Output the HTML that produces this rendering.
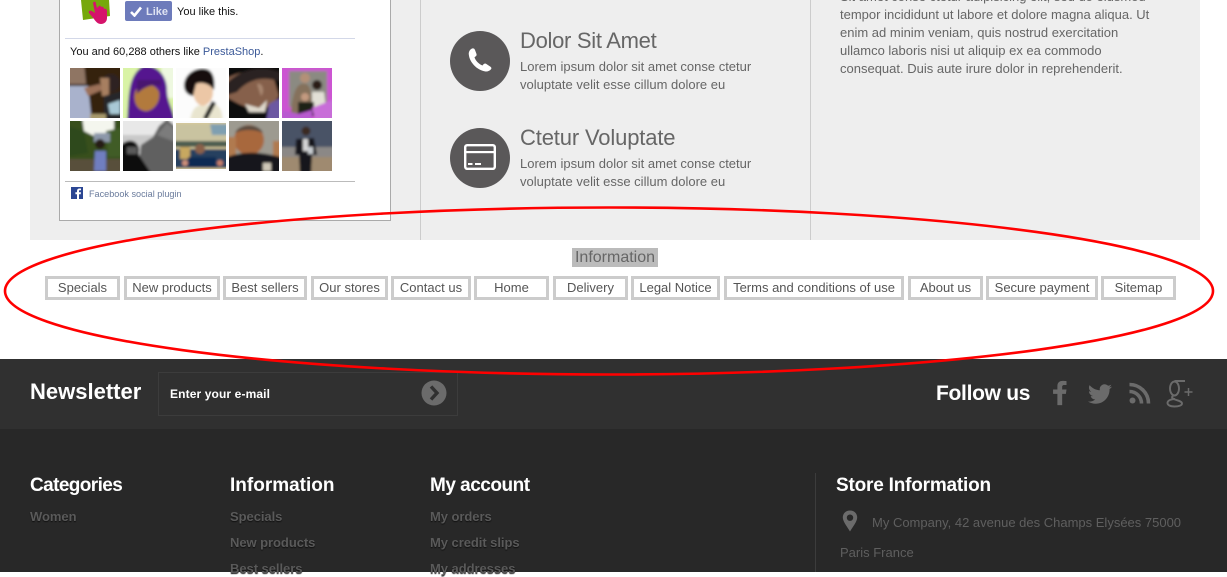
<!DOCTYPE html>
<html lang="en">
<head>
<meta charset="utf-8">
<title>Footer</title>
<style>
html,body{margin:0;padding:0;width:1227px;height:572px;overflow:hidden;background:#fff;font-family:"Liberation Sans",sans-serif}
.a{position:absolute;white-space:nowrap}
.bx{position:absolute;top:276px;height:18px;line-height:17px;border:3px solid #ccc;text-align:center;font-size:13px;color:#555;background:#fff;box-sizing:content-box}
.p{position:absolute;width:50px;height:50px;display:block}
.lorem{font-size:13px;line-height:18px;color:#666;left:520px}
.h{font-size:22px;line-height:26px;color:#666;left:520px;letter-spacing:-.3px}
.ft{font-size:19px;font-weight:bold;color:#fff;line-height:24px}
.lk{font-size:13px;font-weight:bold;color:#5a5a5a;line-height:16px;letter-spacing:-.05px;text-shadow:0 1px 1px #111}
</style>
</head>
<body>
<div class="a" style="left:30px;top:0;width:1170px;height:240px;background:#eee"></div>
<div class="a" style="left:420px;top:0;width:1px;height:240px;background:#ccc"></div>
<div class="a" style="left:810px;top:0;width:1px;height:240px;background:#ccc"></div>

<div class="a" style="left:59px;top:-5px;width:330px;height:224px;background:#fff;border:1px solid #aaa"></div>
<svg class="a" style="left:78px;top:0" width="36" height="26" viewBox="0 0 36 26">
<path d="M3 0H31L32 16L5 20Z" fill="#76a80c"/>
<path d="M15 3C16 1 18 1 18 4L19 8L21 6C22 5 23 6 23 7C24 6 26 7 26 9C27 8 29 9 29 11L29 18C29 22 26 24 23 24C20 24 18 22 16 19L11 13C10 11 12 10 14 11L17 13Z" fill="#d5136b"/>
</svg>
<div class="a" style="left:125px;top:1px;width:47px;height:20px;background:#6d7bbb;border-radius:2px"></div>
<svg class="a" style="left:130px;top:6px" width="12" height="11" viewBox="0 0 12 11"><path d="M1 6L4.500 9.500L11 1.500" fill="none" stroke="#fff" stroke-width="2.600"/></svg>
<div class="a" style="left:146px;top:4px;font-size:11px;line-height:16px;font-weight:bold;color:#dfe3f2">Like</div>
<div class="a" style="left:177px;top:4px;font-size:11px;line-height:16px;color:#111">You like this.</div>
<div class="a" style="left:65px;top:38px;width:290px;height:1px;background:#d3d8e8"></div>
<div class="a" style="left:70px;top:44px;font-size:11px;line-height:16px;color:#111">You and 60,288 others like <span style="color:#3b5998">PrestaShop</span>.</div>

<svg width="0" height="0" style="position:absolute"><filter id="b" x="0" y="0" width="100%" height="100%"><feGaussianBlur stdDeviation="1.300"/></filter></svg>
<svg class="p" style="left:70px;top:68px" viewBox="0 0 50 50"><g filter="url(#b)"><rect x="-10" y="-10" width="70" height="70" fill="#35200f"/><path d="M-5 -5H14L16 16H-5Z" fill="#8f7464"/><path d="M-5 18H18L22 55H-5Z" fill="#a9b2cc"/><path d="M14 20L30 16L32 22L18 28Z" fill="#9c7158"/><circle cx="41" cy="15" r="9" fill="#2d2420"/><path d="M30 10H39V28H32Z" fill="#a77f60"/><path d="M34 28L55 22V55H34Z" fill="#27272b"/><path d="M38 36L50 32V46H40Z" fill="#a9c9d6"/><rect y="46" x="20" width="16" height="9" fill="#a89a6c"/></g></svg>
<svg class="p" style="left:123px;top:68px" viewBox="0 0 50 50"><g filter="url(#b)"><rect x="-10" y="-10" width="70" height="70" fill="#d9f3a6"/><path d="M38 -5H55V30L40 30Z" fill="#eef8e0"/><path d="M4 55C6 30 4 8 20 -2C34 -4 44 8 44 22C44 34 50 40 52 55Z" fill="#55178f"/><path d="M12 24C16 14 32 14 36 24C38 36 28 44 22 43C14 42 10 34 12 24Z" fill="#b27a3c"/><path d="M14 12H38V18C30 16 22 18 14 26Z" fill="#4a1470"/></g></svg>
<svg class="p" style="left:176px;top:68px" viewBox="0 0 50 50"><g filter="url(#b)"><rect x="-10" y="-10" width="70" height="70" fill="#fcfcfc"/><path d="M18 14C26 10 37 12 37 24C37 34 30 38 26 38C20 36 15 28 18 18Z" fill="#ecc7a6"/><path d="M8 17C9 4 22 -1 30 1C39 3 39 16 38 22C32 14 24 14 20 16L17 28C11 27 8 23 8 17Z" fill="#14100f"/><path d="M14 55C15 40 22 36 26 38C32 38 38 34 42 38C46 42 46 46 47 55Z" fill="#e9e5cf"/><path d="M27 50L36 33L40 35L31 52Z" fill="#1c1c1c"/></g></svg>
<svg class="p" style="left:229px;top:68px" viewBox="0 0 50 50"><g filter="url(#b)"><rect x="-10" y="-10" width="70" height="70" fill="#0d0b0a"/><path d="M-5 12C10 2 34 0 44 8L50 28L44 36L30 44L10 36L-5 28Z" fill="#86614c"/><path d="M-5 18C10 0 36 -4 55 6L52 14C36 8 20 10 8 24L-5 28Z" fill="#2a2420"/><path d="M16 36L30 40L38 32L36 44L20 44Z" fill="#ded8cc"/><path d="M40 36L55 28V55H37Z" fill="#6c59a2"/><path d="M28 16C34 14 36 24 32 28Z" fill="#a88670"/></g></svg>
<svg class="p" style="left:282px;top:68px" viewBox="0 0 50 50"><g filter="url(#b)"><rect x="-10" y="-10" width="70" height="70" fill="#cc55d2"/><rect x="7" y="3" width="38" height="36" fill="#8b8a82"/><path d="M8 55C10 20 16 14 24 16C30 18 30 30 30 55Z" fill="#85715c"/><circle cx="23" cy="10" r="5" fill="#b39078"/><circle cx="35" cy="17" r="5" fill="#2a1d18"/><path d="M30 24H42L44 40H30Z" fill="#e2e0d6"/><circle cx="23" cy="29" r="4" fill="#c39a80"/><path d="M16 34H32V48H16Z" fill="#1a2018"/><path d="M30 40L55 30V55H34Z" fill="#c86dd8"/><path d="M0 42L16 46L30 42V55H0Z" fill="#b85ad0"/></g></svg>
<svg class="p" style="left:70px;top:121px" viewBox="0 0 50 50"><g filter="url(#b)"><rect x="-10" y="-10" width="70" height="70" fill="#37501f"/><path d="M12 -5H44V12L26 16L14 10Z" fill="#f4f6ee"/><path d="M-5 4L14 10L18 32L-5 36Z" fill="#2d4a1a"/><path d="M36 10L55 6V36L38 36Z" fill="#3f5c26"/><path d="M-5 38H55V55H-5Z" fill="#58503a"/><rect x="24" y="12" width="16" height="9" fill="#8d98aa"/><circle cx="30" cy="23" r="5" fill="#251b14"/><path d="M25 30H36L36 50H24Z" fill="#6f7ec0"/></g></svg>
<svg class="p" style="left:123px;top:121px" viewBox="0 0 50 50"><g filter="url(#b)"><rect x="-10" y="-10" width="70" height="70" fill="#e8e8e8"/><path d="M-5 14H50V30H-5Z" fill="#bcbcbc" opacity=".7"/><path d="M14 55L18 24L30 16L36 5L44 -2L55 8V55Z" fill="#606060"/><path d="M34 14L44 2L55 10V22Z" fill="#7c7c7c"/><path d="M-5 55V28C0 18 14 16 16 28V34L30 55Z" fill="#101010"/><rect x="4" y="26" width="10" height="7" fill="#5a5a5a"/></g></svg>
<svg class="p" style="left:176px;top:121px" viewBox="0 0 50 50"><g filter="url(#b)"><rect x="-10" y="-10" width="70" height="70" fill="#d8c99a"/><path d="M-5 3H50V20H-5Z" fill="#c9c3a0"/><path d="M34 3H55V14H36Z" fill="#7f9fb1"/><rect x="-5" y="20" width="60" height="6" fill="#4c5b4f"/><path d="M-5 28H55V47H-5Z" fill="#27405e"/><rect x="4" y="26" width="10" height="12" fill="#c7a861"/><circle cx="24" cy="28" r="5" fill="#8a6048"/><path d="M12 36H40V47H12Z" fill="#112a52"/><circle cx="9" cy="42" r="3" fill="#d0917a"/><circle cx="44" cy="42" r="3" fill="#c9806a"/></g><rect width="50" height="2" fill="#fcfcfc"/><rect y="48" width="50" height="2" fill="#fcfcfc"/></svg>
<svg class="p" style="left:229px;top:121px" viewBox="0 0 50 50"><g filter="url(#b)"><rect x="-10" y="-10" width="70" height="70" fill="#9d9a90"/><circle cx="20" cy="19" r="15" fill="#a8683c"/><path d="M6 12C10 2 30 2 34 12C26 8 14 8 6 12Z" fill="#5a4c40"/><rect x="-2" y="16" width="9" height="20" fill="#b07a50"/><rect x="44" y="20" width="8" height="16" fill="#b07a50"/><path d="M-5 37C14 30 30 30 55 37V55H-5Z" fill="#15161a"/><rect x="34" y="42" width="8" height="8" fill="#cfc8b8"/></g></svg>
<svg class="p" style="left:282px;top:121px" viewBox="0 0 50 50"><g filter="url(#b)"><rect x="-10" y="-10" width="70" height="70" fill="#4a5266"/><rect x="-5" y="26" width="60" height="10" fill="#8b8886"/><rect x="-5" y="36" width="60" height="20" fill="#9f8a70"/><circle cx="24" cy="10" r="4.500" fill="#3a2a20"/><path d="M14 18L32 17L35 34L30 34L29 55H18L17 34L13 34Z" fill="#15141a"/><rect x="21" y="18" width="5" height="12" fill="#d6d6d6"/><rect x="26" y="26" width="5" height="7" fill="#c8ccd0"/></g></svg>

<div class="a" style="left:65px;top:181px;width:290px;height:1px;background:#bbb"></div>
<div class="a" style="left:71px;top:187px;width:12px;height:12px;background:#2b4693"></div>
<svg class="a" style="left:71px;top:187px" width="12" height="12" viewBox="0 0 12 12"><path d="M8 12V7.200H9.700L10 5.300H8V4.200C8 3.600 8.200 3.300 8.900 3.300H10V1.600C9.700 1.500 9.100 1.500 8.500 1.500C7 1.500 6 2.400 6 4V5.300H4.400V7.200H6V12Z" fill="#fff"/></svg>
<div class="a" style="left:89px;top:187px;font-size:9.100px;line-height:15px;color:#6a7b9c">Facebook social plugin</div>

<svg class="a" style="left:450px;top:31px" width="60" height="60" viewBox="0 0 60 60"><circle cx="30" cy="30" r="30" fill="#5a5859"/><path transform="translate(18 17)" d="M4 .5C5.500 0 6.500 .5 7 2L8.500 6C8.800 7 8.500 7.800 7.500 8.500L6.500 9.200C7.500 12.500 10.500 15.800 14.500 17.500L15.500 16.300C16.300 15.500 17.200 15.300 18 15.800L22.500 18.800C23.500 19.600 23.700 20.500 23 21.300C21.500 23 19.500 23.800 17.500 23.500C8.500 22 1.500 14 .8 6.500C.5 4 1.800 1.500 4 .5Z" fill="#fff"/></svg>
<svg class="a" style="left:450px;top:128px" width="60" height="60" viewBox="0 0 60 60"><circle cx="30" cy="30" r="30" fill="#5a5859"/><rect x="15.200" y="17.200" width="29.600" height="23.600" rx="2" fill="none" stroke="#fff" stroke-width="2.400"/><rect x="15" y="23" width="30" height="2.200" fill="#fff"/><rect x="18" y="35" width="4.500" height="2" fill="#fff"/><rect x="25" y="35" width="6" height="2" fill="#fff"/></svg>
<div class="a h" style="top:28px">Dolor Sit Amet</div>
<div class="a lorem" style="top:58px">Lorem ipsum dolor sit amet conse ctetur<br>voluptate velit esse cillum dolore eu</div>
<div class="a h" style="top:125px;letter-spacing:-.15px">Ctetur Voluptate</div>
<div class="a lorem" style="top:155px">Lorem ipsum dolor sit amet conse ctetur<br>voluptate velit esse cillum dolore eu</div>
<div class="a lorem" style="left:840px;top:-12px">Sit amet conse ctetur adipisicing elit, sed do eiusmod<br>tempor incididunt ut labore et dolore magna aliqua. Ut<br>enim ad minim veniam, quis nostrud exercitation<br>ullamco laboris nisi ut aliquip ex ea commodo<br>consequat. Duis aute irure dolor in reprehenderit.</div>

<div class="a" style="left:572px;top:248px;width:86px;height:19px;background:#bbb;color:#666;font-size:16px;line-height:19px;text-align:center">Information</div>
<div class="bx" style="left:45px;width:69px">Specials</div>
<div class="bx" style="left:124px;width:90px">New products</div>
<div class="bx" style="left:223px;width:78px">Best sellers</div>
<div class="bx" style="left:311px;width:71px">Our stores</div>
<div class="bx" style="left:391px;width:74px">Contact us</div>
<div class="bx" style="left:474px;width:69px">Home</div>
<div class="bx" style="left:553px;width:69px">Delivery</div>
<div class="bx" style="left:631px;width:83px">Legal Notice</div>
<div class="bx" style="left:724px;width:174px">Terms and conditions of use</div>
<div class="bx" style="left:908px;width:69px">About us</div>
<div class="bx" style="left:986px;width:106px">Secure payment</div>
<div class="bx" style="left:1101px;width:69px">Sitemap</div>

<div class="a" style="left:0;top:359px;width:1227px;height:70px;background:#303030"></div>
<div class="a" style="left:0;top:429px;width:1227px;height:143px;background:#282828"></div>
<div class="a" style="left:30px;top:378px;font-size:22px;font-weight:bold;line-height:28px;color:#fff">Newsletter</div>
<div class="a" style="left:158px;top:372px;width:298px;height:42px;border:1px solid #3c3c3c"></div>
<div class="a" style="left:170px;top:386px;font-size:12px;font-weight:bold;line-height:16px;letter-spacing:.12px;color:#fff">Enter your e-mail</div>
<svg class="a" style="left:421px;top:380px" width="26" height="26" viewBox="0 0 26 26"><circle cx="13" cy="13" r="12.500" fill="#6b6b6b"/><path d="M10 6.500L16 13L10 19.500" fill="none" stroke="#303030" stroke-width="3.400"/></svg>
<div class="a" style="left:936px;top:380px;font-size:21px;font-weight:bold;line-height:28px;letter-spacing:-.3px;color:#fff">Follow us</div>
<svg class="a" style="left:1051px;top:380px" width="18" height="26" viewBox="0 0 20 30"><path d="M7 29V16H2V11H7V7C7 3 9.500 1 13 1C15 1 16.500 1.200 17.500 1.300V5.800H15C13 5.800 12.500 6.800 12.500 8.200V11H17.500L16.800 16H12.500V29Z" fill="#6b6b6b"/></svg>
<svg class="a" style="left:1088px;top:382px" width="24" height="24" viewBox="0 0 24 24"><path fill="#6b6b6b" d="M23.953 4.57a10 10 0 01-2.825.775 4.958 4.958 0 002.163-2.723c-.951.555-2.005.959-3.127 1.184a4.92 4.92 0 00-8.384 4.482C7.69 8.095 4.067 6.13 1.64 3.162a4.822 4.822 0 00-.666 2.475c0 1.71.87 3.213 2.188 4.096a4.904 4.904 0 01-2.228-.616v.06a4.923 4.923 0 003.946 4.827 4.996 4.996 0 01-2.212.085 4.936 4.936 0 004.604 3.417 9.867 9.867 0 01-6.102 2.105c-.39 0-.779-.023-1.17-.067a13.995 13.995 0 007.557 2.209c9.053 0 13.998-7.496 13.998-13.985 0-.21 0-.42-.015-.63A9.935 9.935 0 0024 4.59z"/></svg>
<svg class="a" style="left:1129px;top:382px" width="23" height="23" viewBox="0 0 23 23"><circle cx="3.500" cy="18.500" r="3" fill="#6b6b6b"/><path d="M.5 9.500A12 12 0 0 1 12.500 21.500M.5 2.500A19 19 0 0 1 19.500 21.500" fill="none" stroke="#6b6b6b" stroke-width="3.600"/></svg>
<svg class="a" style="left:1166px;top:379px" width="28" height="29" viewBox="0 0 28 29"><g fill="none" stroke="#6b6b6b" stroke-width="1.900"><ellipse cx="8.500" cy="9.500" rx="4.500" ry="7"/><path d="M19 2H8.500M7.500 16.500C5 18 6 19.500 9 20.500C13 22 16 22.500 16 24.500C16 26.500 12.500 27.500 8.500 27.500C4 27.500 1.500 26 1.500 24C1.500 21.500 5 20 9 20"/></g><path d="M22.500 9V17M18.500 13H26.500" stroke="#6b6b6b" stroke-width="1.500"/></svg>

<div class="a ft" style="left:30px;top:474px;letter-spacing:-.6px">Categories</div>
<div class="a ft" style="left:230px;top:474px">Information</div>
<div class="a ft" style="left:430px;top:474px;letter-spacing:-.5px">My account</div>
<div class="a ft" style="left:836px;top:474px;letter-spacing:-.2px">Store Information</div>
<div class="a lk" style="left:30px;top:509px">Women</div>
<div class="a lk" style="left:230px;top:509px">Specials</div>
<div class="a lk" style="left:230px;top:535px">New products</div>
<div class="a lk" style="left:230px;top:561px">Best sellers</div>
<div class="a lk" style="left:430px;top:509px">My orders</div>
<div class="a lk" style="left:430px;top:535px">My credit slips</div>
<div class="a lk" style="left:430px;top:561px">My addresses</div>
<div class="a" style="left:815px;top:473px;width:1px;height:99px;background:#3c3c3c"></div>
<svg class="a" style="left:842px;top:510px" width="16" height="22" viewBox="0 0 16 22"><path fill-rule="evenodd" d="M8 .5C3.800 .5 .8 3.500 .8 7.500C.8 11.500 5 16.500 8 21.500C11 16.500 15.200 11.500 15.200 7.500C15.200 3.500 12.200 .5 8 .5ZM8 4.500A3.200 3.200 0 1 1 8 10.900A3.200 3.200 0 1 1 8 4.500Z" fill="#6b6b6b"/></svg>
<div class="a" style="left:872px;top:515px;font-size:13px;line-height:16px;color:#5f5f5f">My Company, 42 avenue des Champs Elysées 75000</div>
<div class="a" style="left:840px;top:545px;font-size:13px;line-height:16px;color:#5f5f5f">Paris France</div>

<svg class="a" style="left:0;top:0;pointer-events:none" width="1227" height="572" viewBox="0 0 1227 572"><ellipse cx="609" cy="291" rx="604" ry="83.500" fill="none" stroke="#f00" stroke-width="2.600"/></svg>
</body>
</html>
